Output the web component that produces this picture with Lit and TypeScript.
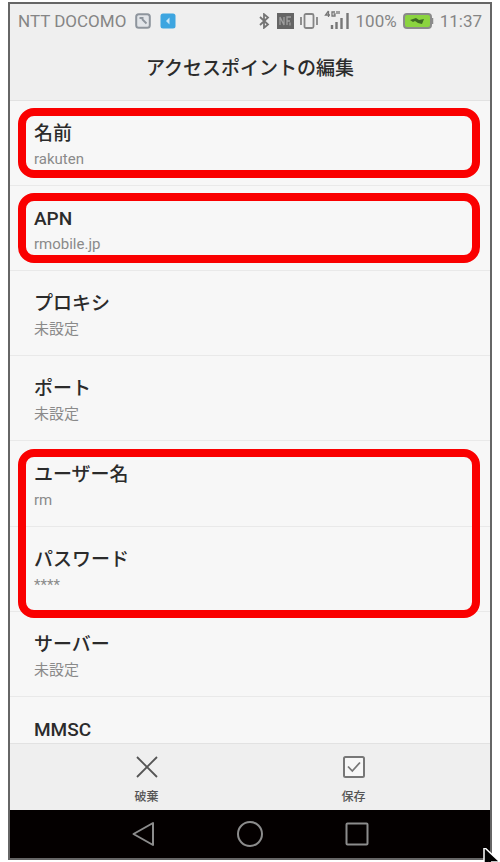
import { LitElement, html, css, svg } from "lit";
import { customElement } from "lit/decorators.js";
import { classMap } from "lit/directives/class-map.js";

interface Entry {
  label: string;
  value?: string;
}

interface Group {
  mark?: "single" | "pair";
  entries: Entry[];
}

const UNSET = "未設定";

const GROUPS: Group[] = [
  { mark: "single", entries: [{ label: "名前", value: "rakuten" }] },
  { mark: "single", entries: [{ label: "APN", value: "rmobile.jp" }] },
  {
    entries: [
      { label: "プロキシ", value: UNSET },
      { label: "ポート", value: UNSET },
    ],
  },
  {
    mark: "pair",
    entries: [
      { label: "ユーザー名", value: "rm" },
      { label: "パスワード", value: "****" },
    ],
  },
  {
    entries: [{ label: "サーバー", value: UNSET }, { label: "MMSC" }],
  },
];

@customElement("status-bar")
class StatusBar extends LitElement {
  static styles = css`
    :host {
      display: flex;
      align-items: center;
      justify-content: space-between;
      height: 34px;
      padding: 0 8px;
      color: #858585;
      font-size: 17px;
      white-space: nowrap;
    }
    .side {
      display: flex;
      align-items: center;
      gap: 6px;
    }
    .side.left {
      gap: 9px;
    }
    svg {
      display: block;
      flex: none;
    }
  `;

  render() {
    return html`
      <div class="side left">
        <span>NTT DOCOMO</span>
        <svg width="16" height="16" viewBox="0 0 16 16" fill="none">
          <rect x="1.2" y="1.2" width="13.6" height="13.6" rx="2.5" fill="#e2e5e9" stroke="#8e959d" stroke-width="2" />
          <path d="M4.500 5h4M7 6l4.500 4.500" stroke="#8e959d" stroke-width="1.8" />
        </svg>
        <svg width="16" height="16" viewBox="0 0 16 16">
          <rect x="0.5" y="0.5" width="15" height="15" rx="2.5" fill="#3da5e0" />
          <path d="M9.500 4.500v7L6 8z" fill="#c5e6f8" />
        </svg>
      </div>
      <div class="side">
        <svg width="13" height="16" viewBox="0 0 13 16" fill="none" stroke="#747474" stroke-width="1.8">
          <path d="M2 4l8 7.5-4 3.3V1.2l4 3.3L2 12" />
        </svg>
        <svg width="17" height="16" viewBox="0 0 17 16">
          <rect width="17" height="16" fill="#656565" />
          <path d="M3 4v8M3 4l4 8V4M10 12V4h4M10 8h3M13 9.500v3" fill="none" stroke="#a0a0a0" stroke-width="1.3" />
        </svg>
        <svg width="18" height="16" viewBox="0 0 18 16" fill="none" stroke="#858585">
          <rect x="4.500" y="1" width="9" height="14" rx="1.5" stroke-width="1.8" />
          <path d="M1 4v8M17 4v8" stroke-width="1.8" />
        </svg>
        <svg width="26" height="22" viewBox="0 0 26 22" fill="none" stroke="#777">
          <path d="M4.500 1L1.500 5h4.500M4.500 1v6M11 2H8v4h3V4H9.500M13 1v3M15 1v3" stroke-width="1.3" />
          <path d="M8 15v4M12.500 12v7M17.500 8v11M23.500 3v16" stroke-width="2.400" />
        </svg>
        <span>100%</span>
        <svg width="31" height="16" viewBox="0 0 31 16">
          <rect x="1" y="1" width="27" height="14" rx="3" fill="#8bd43f" stroke="#8b8b8b" stroke-width="2" />
          <path d="M29 5v6" stroke="#8b8b8b" stroke-width="2.500" />
          <path d="M7 7l6-2 3 2 5-1-2 5-4-1-3-2-2 1z" fill="#3f6a25" />
        </svg>
        <span>11:37</span>
      </div>
    `;
  }
}

@customElement("app-root")
class AppRoot extends LitElement {
  static styles = css`
    :host {
      display: flex;
      flex-direction: column;
      position: relative;
      box-sizing: border-box;
      height: 100vh;
      padding: 2px 8px;
      overflow: hidden;
      background: #fff;
      font-family: Roboto, "Noto Sans CJK JP", sans-serif;
    }
    .phone {
      flex: 1;
      min-height: 0;
      display: flex;
      flex-direction: column;
      border: 2px solid #666;
      background: #f7f7f7;
    }
    header {
      flex: none;
      background: #efefef;
      border-bottom: 1px solid #e2e2e2;
    }
    h1 {
      margin: 0;
      color: #2b2b2b;
      font-size: 19px;
      font-weight: 500;
      line-height: 62px;
      text-align: center;
    }
    button {
      margin: 0;
      border: 0;
      background: none;
      font-family: inherit;
      cursor: pointer;
    }
    main {
      flex: 1;
      min-height: 0;
      overflow: hidden;
    }
    .group {
      position: relative;
    }
    .group.plain {
      padding-bottom: 1px;
    }
    .mark {
      position: absolute;
      inset: 7px 10px 8px 8px;
      border: 8px solid #fa0000;
      border-radius: 16px;
      pointer-events: none;
      z-index: 1;
    }
    .mark.pair {
      bottom: -6px;
    }
    .row {
      display: flex;
      flex-direction: column;
      box-sizing: border-box;
      width: 100%;
      height: 85px;
      padding: 20px 24px 0;
      border-bottom: 1px solid #e9e9e9;
      text-align: left;
    }
    .label {
      color: #2b2b2b;
      font-size: 19px;
      font-weight: 500;
      line-height: 26px;
    }
    .value {
      color: #8a8a8a;
      font-size: 15px;
      line-height: 24px;
    }
    .actions {
      flex: none;
      display: grid;
      grid-template-columns: 1fr 1fr;
      padding: 0 33px;
      background: #efefef;
      border-top: 1px solid #e2e2e2;
    }
    .action {
      display: flex;
      flex-direction: column;
      align-items: center;
      gap: 8px;
      padding: 12px 0 4px;
      color: #555;
      font-size: 12px;
      font-weight: 500;
      line-height: 18px;
    }
    .nav {
      flex: none;
      display: grid;
      grid-template-columns: repeat(3, 1fr);
      padding: 0 80px;
      background: #040000;
    }
    .key {
      display: flex;
      align-items: center;
      justify-content: center;
      height: 48px;
      padding: 0;
    }
    svg {
      display: block;
      flex: none;
    }
    .pointer {
      position: absolute;
      right: 0;
      bottom: 0;
    }
  `;

  private renderGroup(group: Group) {
    return html`
      <section class=${classMap({ group: true, plain: !group.mark })}>
        ${group.entries.map(
          (e) => html`
            <button class="row">
              <span class="label">${e.label}</span>
              ${e.value ? html`<span class="value">${e.value}</span>` : null}
            </button>
          `
        )}
        ${group.mark
          ? html`<div class=${classMap({ mark: true, pair: group.mark === "pair" })}></div>`
          : null}
      </section>
    `;
  }

  private renderKey(name: string, shape: unknown) {
    return html`
      <button class="key" aria-label=${name}>
        <svg width="26" height="26" viewBox="0 0 26 26" fill="none" stroke="#8c8c8c" stroke-width="2" stroke-linejoin="round">
          ${shape}
        </svg>
      </button>
    `;
  }

  render() {
    return html`
      <div class="phone">
        <header>
          <status-bar></status-bar>
          <h1>アクセスポイントの編集</h1>
        </header>
        <main>${GROUPS.map((g) => this.renderGroup(g))}</main>
        <div class="actions">
          <button class="action">
            <svg width="24" height="24" viewBox="0 0 24 24" fill="none" stroke="#555" stroke-width="1.8">
              <path d="M2 1l20 20M22 1L2 21" />
            </svg>
            <span>破棄</span>
          </button>
          <button class="action">
            <svg width="24" height="24" viewBox="0 0 24 24" fill="none" stroke="#777" stroke-width="1.8">
              <rect x="2" y="1" width="20" height="20" rx="1.500" fill="#f7f7f7" stroke-width="2" />
              <path d="M6 10.500l4.300 4.500L18 6.500" />
            </svg>
            <span>保存</span>
          </button>
        </div>
        <nav class="nav">
          ${this.renderKey("戻る", svg`<path d="M3.500 13L23 2V24z" />`)}
          ${this.renderKey("ホーム", svg`<circle cx="13" cy="13" r="12" />`)}
          ${this.renderKey("履歴", svg`<rect x="2.500" y="2.500" width="21" height="21" rx="1" />`)}
        </nav>
      </div>
      <svg class="pointer" width="18" height="14" viewBox="0 0 18 14">
        <path d="M2 -1L2 19L6 15l3 7 4-2-3-6h8z" fill="#000" stroke="#fff" stroke-width="1.500" />
      </svg>
    `;
  }
}
